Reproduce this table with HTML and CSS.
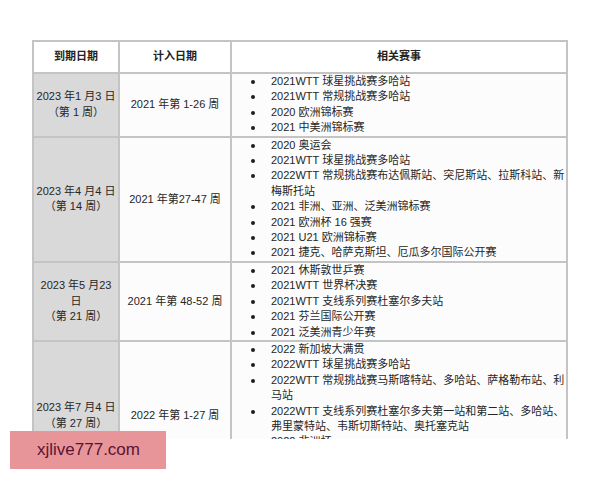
FILE: index.html
```html
<!DOCTYPE html>
<html lang="zh-CN">
<head>
<meta charset="utf-8">
<title>积分到期表</title>
<link rel="stylesheet" href="styles.css">
</head>
<body>
<div class="page">
  <div class="clip">
    <table class="points">
      <colgroup>
        <col class="c1">
        <col class="c2">
        <col class="c3">
      </colgroup>
      <thead>
        <tr>
          <th>到期日期</th>
          <th>计入日期</th>
          <th>相关赛事</th>
        </tr>
      </thead>
      <tbody>
        <tr>
          <td class="due">2023 年1 月3 日<br>（第 1 周）</td>
          <td class="count">2021 年第 1-26 周</td>
          <td class="events">
            <ul>
              <li>2021WTT 球星挑战赛多哈站</li>
              <li>2021WTT 常规挑战赛多哈站</li>
              <li>2020 欧洲锦标赛</li>
              <li>2021 中美洲锦标赛</li>
            </ul>
          </td>
        </tr>
        <tr>
          <td class="due">2023 年4 月4 日<br>（第 14 周）</td>
          <td class="count">2021 年第27-47 周</td>
          <td class="events">
            <ul>
              <li>2020 奥运会</li>
              <li>2021WTT 球星挑战赛多哈站</li>
              <li>2022WTT 常规挑战赛布达佩斯站、突尼斯站、拉斯科站、新梅斯托站</li>
              <li>2021 非洲、亚洲、泛美洲锦标赛</li>
              <li>2021 欧洲杯 16 强赛</li>
              <li>2021 U21 欧洲锦标赛</li>
              <li>2021 捷克、哈萨克斯坦、厄瓜多尔国际公开赛</li>
            </ul>
          </td>
        </tr>
        <tr>
          <td class="due">2023 年5 月23 日<br>（第 21 周）</td>
          <td class="count">2021 年第 48-52 周</td>
          <td class="events">
            <ul>
              <li>2021 休斯敦世乒赛</li>
              <li>2021WTT 世界杯决赛</li>
              <li>2021WTT 支线系列赛杜塞尔多夫站</li>
              <li>2021 芬兰国际公开赛</li>
              <li>2021 泛美洲青少年赛</li>
            </ul>
          </td>
        </tr>
        <tr>
          <td class="due">2023 年7 月4 日<br>（第 27 周）</td>
          <td class="count">2022 年第 1-27 周</td>
          <td class="events">
            <ul class="continues">
              <li>2022 新加坡大满贯</li>
              <li>2022WTT 球星挑战赛多哈站</li>
              <li>2022WTT 常规挑战赛马斯喀特站、多哈站、萨格勒布站、利马站</li>
              <li>2022WTT 支线系列赛杜塞尔多夫第一站和第二站、多哈站、弗里蒙特站、韦斯切斯特站、奥托塞克站</li>
              <li>2022 非洲杯</li>
            </ul>
          </td>
        </tr>
      </tbody>
    </table>
  </div>
  <div class="watermark">xjlive777.com</div>
</div>
</body>
</html>
```
FILE: styles.css
```css
html, body {
  margin: 0;
  padding: 0;
  background: #ffffff;
}

.page {
  position: relative;
  width: 600px;
  height: 480px;
  overflow: hidden;
  font-family: "Liberation Sans", "Noto Sans CJK SC", sans-serif;
  font-size: 11px;
  line-height: 15.4px;
  color: #262626;
}

.clip {
  height: 439px;
  overflow: hidden;
  box-sizing: border-box;
  padding: 40px 0 0 32px;
}

.points {
  width: 534px;
  border-collapse: collapse;
  table-layout: fixed;
  background: #fcfcfc;
}

.c1 { width: 86px; }
.c2 { width: 112px; }
.c3 { width: 336px; }

.points th,
.points td {
  border: 2px solid #c4c4c4;
  padding: 0 1px;
  vertical-align: middle;
  text-align: center;
}

.points th {
  height: 30px;
  font-weight: bold;
  background: #ffffff;
  color: #222222;
}

.points td.due {
  background: #d9d9d9;
}

.points td.events {
  text-align: left;
  padding: 0;
}

.events ul {
  margin: 0;
  padding: 0 0 0 19px;
  list-style: none;
}

.events ul.continues {
  padding-bottom: 40px;
}

.events li {
  display: grid;
  grid-template-columns: 20px 1fr;
}

.events li::before {
  content: "";
  width: 4px;
  height: 4px;
  margin-top: 6px;
  border-radius: 50%;
  background: #1e1e1e;
}

.watermark {
  position: absolute;
  left: 10px;
  top: 431px;
  width: 156px;
  height: 38px;
  box-sizing: border-box;
  padding-left: 27px;
  background: #e8959a;
  color: #5a1432;
  font-size: 17px;
  line-height: 38px;
  z-index: 2;
}
```
